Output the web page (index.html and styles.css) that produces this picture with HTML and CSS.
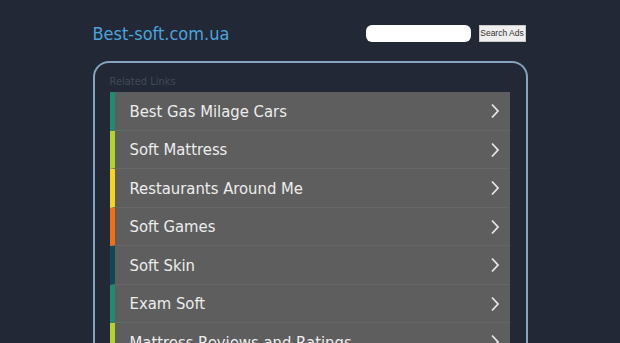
FILE: index.html
```html
<!DOCTYPE html>
<html>
<head>
<meta charset="utf-8">
<link rel="stylesheet" href="styles.css">
</head>
<body>
<div class="page">
  <header class="header">
    <div class="logo">Best-soft.com.ua</div>
    <form class="search">
      <input class="search-input" type="text">
      <button class="search-btn" type="button">Search Ads</button>
    </form>
  </header>
  <section class="box">
    <div class="box-title">Related Links</div>
    <ul class="links">
      <li class="link c1"><span>Best Gas Milage Cars</span><svg class="chev" viewBox="0 0 10 16"><polyline points="2,1.5 8,8 2,14.5"/></svg></li>
      <li class="link c2"><span>Soft Mattress</span><svg class="chev" viewBox="0 0 10 16"><polyline points="2,1.5 8,8 2,14.5"/></svg></li>
      <li class="link c3"><span>Restaurants Around Me</span><svg class="chev" viewBox="0 0 10 16"><polyline points="2,1.5 8,8 2,14.5"/></svg></li>
      <li class="link c4"><span>Soft Games</span><svg class="chev" viewBox="0 0 10 16"><polyline points="2,1.5 8,8 2,14.5"/></svg></li>
      <li class="link c5"><span>Soft Skin</span><svg class="chev" viewBox="0 0 10 16"><polyline points="2,1.5 8,8 2,14.5"/></svg></li>
      <li class="link c1"><span>Exam Soft</span><svg class="chev" viewBox="0 0 10 16"><polyline points="2,1.5 8,8 2,14.5"/></svg></li>
      <li class="link c2"><span>Mattress Reviews and Ratings</span><svg class="chev" viewBox="0 0 10 16"><polyline points="2,1.5 8,8 2,14.5"/></svg></li>
    </ul>
  </section>
</div>
</body>
</html>
```

FILE: styles.css
```css
html, body {
  margin: 0;
  padding: 0;
  background: #222835;
  height: 100%;
  overflow: hidden;
}
body {
  font-family: "DejaVu Sans Condensed", "DejaVu Sans", sans-serif;
}
.page {
  width: 435px;
  margin: 0 auto;
  padding-top: 21px;
}
.header {
  display: flex;
  align-items: center;
  justify-content: space-between;
  padding: 0 2px 0 0;
  height: 24px;
}
.logo {
  color: #4ba3dc;
  font-size: 18px;
}
.search {
  display: flex;
  align-items: center;
  gap: 8px;
  margin: 0;
}
.search-input {
  width: 105px;
  height: 17px;
  box-sizing: border-box;
  border: none;
  border-radius: 6px;
  background: #ffffff;
  padding: 0;
}
.search-btn {
  height: 17px;
  width: 47px;
  box-sizing: border-box;
  padding: 0;
  border: 1px solid #c8c8c8;
  background: #efefef;
  color: #333;
  font-family: "Liberation Sans", sans-serif;
  font-size: 8.5px;
}
.box {
  margin-top: 16px;
  border: 2px solid #87a3bf;
  border-bottom: none;
  border-radius: 16px 16px 0 0;
  padding: 12px 16px 0 15px;
  height: 300px;
}
.box-title {
  color: #414a5a;
  font-size: 11px;
  line-height: 14px;
  margin-bottom: 3px;
}
.links {
  list-style: none;
  margin: 0;
  padding: 0;
}
.link {
  display: flex;
  align-items: center;
  justify-content: space-between;
  box-sizing: border-box;
  height: 38.5px;
  background: #5e5e5e;
  border-left: 5px solid #1e8a6f;
  border-bottom: 1px solid #666666;
  padding: 1px 10px 0 15px;
  color: #ededed;
  font-size: 16.5px;
}
.c1 { border-left-color: #1f8b70; }
.c2 { border-left-color: #b3d32f; }
.c3 { border-left-color: #f5d61b; }
.c4 { border-left-color: #f26f0f; }
.c5 { border-left-color: #12475a; }
.chev {
  width: 10px;
  height: 16px;
  fill: none;
  stroke: #e6e6e6;
  stroke-width: 1.8;
}
```
